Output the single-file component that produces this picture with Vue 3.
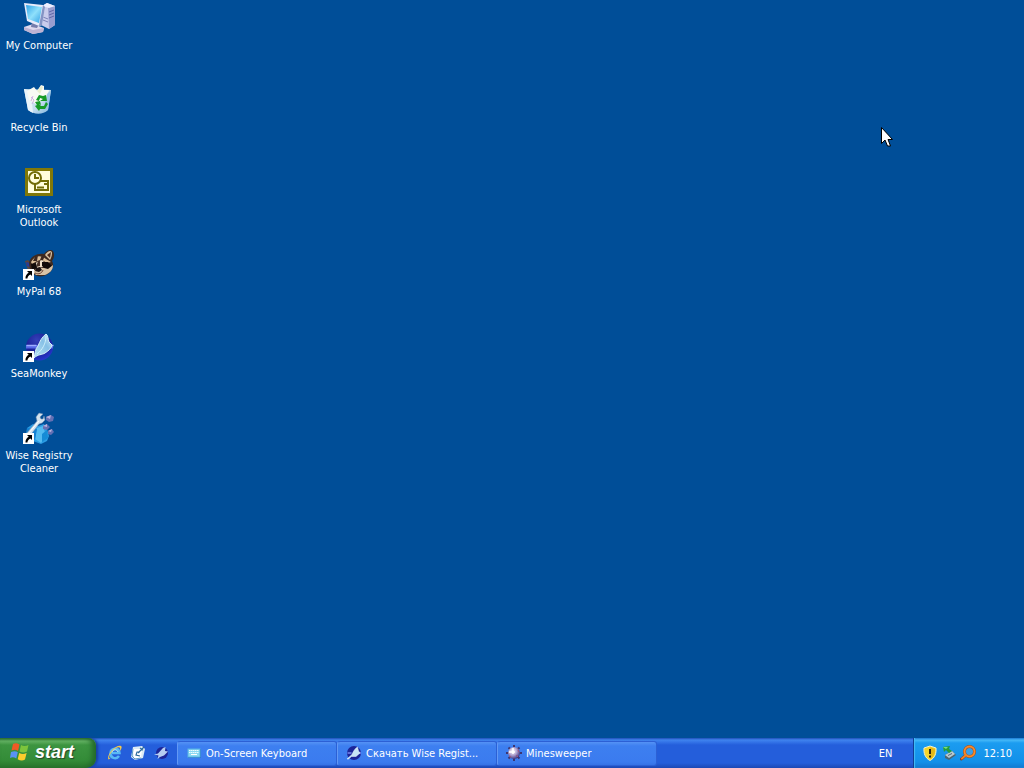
<script setup>
const tasks = [
  { id: 'keyboard', label: 'On-Screen Keyboard' },
  { id: 'seamonkey', label: 'Скачать Wise Regist...' },
  { id: 'mines', label: 'Minesweeper' },
]
</script>

<template>
  <div class="screen">
    <svg class="defs" aria-hidden="true">
      <defs>
        <linearGradient id="monitor" x1="0" y1="0" x2="1" y2="1">
          <stop offset="0" stop-color="#2fa4ea" /><stop offset="0.5" stop-color="#8fe0fb" /><stop offset="1" stop-color="#2f9fe4" />
        </linearGradient>
        <linearGradient id="bin" x1="0" y1="0" x2="1" y2="1">
          <stop offset="0" stop-color="#dcecf6" /><stop offset="0.6" stop-color="#c4ddef" /><stop offset="1" stop-color="#77aeda" />
        </linearGradient>
        <radialGradient id="sea" cx="0.4" cy="0.25" r="0.8">
          <stop offset="0" stop-color="#3440b8" /><stop offset="0.55" stop-color="#1a2098" /><stop offset="1" stop-color="#2738d2" />
        </radialGradient>
        <linearGradient id="wing" x1="0" y1="1" x2="1" y2="0">
          <stop offset="0" stop-color="#b9e3f4" /><stop offset="0.6" stop-color="#86c0e6" /><stop offset="1" stop-color="#d5f0fa" />
        </linearGradient>
        <radialGradient id="mine" cx="0.4" cy="0.35" r="0.7">
          <stop offset="0" stop-color="#ffffff" /><stop offset="0.45" stop-color="#b6a9d4" /><stop offset="1" stop-color="#312a76" />
        </radialGradient>
        <symbol id="arrow" viewBox="0 0 11 11">
          <rect width="11" height="11" fill="#fff" />
          <path d="M4 2h5v5L7.400 5.400C5.500 6.400 4.600 7.700 4.400 9.500H2.500C2.300 7 3.500 5 5.700 3.700Z" fill="#000" />
        </symbol>
        <symbol id="seamonkey" viewBox="0 0 32 32">
          <circle cx="16.500" cy="17" r="13.500" fill="url(#sea)" />
          <path d="M3 15h27v3.500h-27z" fill="#5567e6" />
          <path d="M3.500 15.500h10M27 15.500h3.500" stroke="#9dadff" stroke-width="1.500" />
          <path d="M11 28C12 24 12 19 15 16C17 11 19 7 23 4C25 5 25 9 26 12L29 15C28 19 25 21 22 23C19 25 15 24 11 28Z" fill="url(#wing)" stroke="#d3eff9" />
          <path d="M14 24C19 20 23 14 23 6" fill="none" stroke="#d9f7ff" stroke-width="0.800" />
        </symbol>
        <symbol id="seamonkey-small" viewBox="0 0 16 16">
          <circle cx="8" cy="8" r="7" fill="#1c2598" />
          <path d="M1.500 8h4M12 8h3" stroke="#7787ee" stroke-width="1.500" />
          <path d="M1 14L6 9.500C7.500 6 9 3.500 11.500 2L12.500 6L14 8L10 11.500L5.500 11.500L2.500 14Z" fill="#c7e4f6" stroke="#e8f6ff" stroke-width="0.500" />
        </symbol>
        <symbol id="seamonkey-bird" viewBox="0 0 16 16">
          <circle cx="9" cy="8" r="6" fill="#1c2598" />
          <path d="M1 9.500L5 8.500L10 3L12.500 2L12 6L15 6.500L11 10.500L7 12L4.500 14L5.500 10.500Z" fill="#b5cdf2" />
        </symbol>
      </defs>
    </svg>

    <main class="desktop">
      <button class="shortcut" type="button">
        <svg viewBox="0 0 32 32" aria-hidden="true">
          <path d="M19 4L24 1L32 4V23L26 27L18 23Z" fill="#c9ccec" />
          <path d="M25 5L32 4V23L26 27Z" fill="#989dcf" />
          <path d="M19 4L24 1L32 4L26 6Z" fill="#eceeff" />
          <path d="M26 10l5-2M26 13l5-2M26 16l5-2" stroke="#6267a8" />
          <path d="M20 15l5 2M20 18l5 2" stroke="#7c83b8" />
          <path d="M1 25L10 22L21 26L20 30L10 32L1 28Z" fill="#dfd9ee" />
          <path d="M1 25L10 28L21 26L20 30L10 32L1 28Z" fill="#bdb3d3" />
          <path d="M9 20L16 22L14 26L8 25Z" fill="#777dac" />
          <path d="M1 1L20 3L22 5L19 23L16 24L4 19Z" fill="#e7ebfa" />
          <path d="M20 3L22 5L19 23L16 24Z" fill="#8493c4" />
          <path d="M3 3L19 5L16 21L5 17Z" fill="url(#monitor)" />
        </svg>
        <span>My Computer</span>
      </button>

      <button class="shortcut" type="button">
        <svg viewBox="0 0 32 32" aria-hidden="true">
          <path d="M1 5L28 6L25 26C20 31 11 31 5 26Z" fill="url(#bin)" />
          <path d="M1 5L8 8L10 29L5 26Z" fill="#e9f4fa" />
          <path d="M4 7L11 3L14 7L18 1L21 2L21 6L26 6L24 13L13 20L6 16Z" fill="#f8faf4" />
          <path d="M14 7L18 2L20 3L17 10Z" fill="#e9efd0" />
          <path d="M8 13L11 16L9 20M10 12L8 17" fill="none" stroke="#d0b4e2" />
          <path d="M24 10L28 6L25 26L20 28Z" fill="#9cc6e6" />
          <path d="M13 16L16 11L20 12L23 11L24 17L17 17L20 15L17 14L16 17Z" fill="#159b26" />
          <path d="M12 18L17 17L18 21L16 20L18 22L21 22L23 18L25 20L22 25H17L16 27L12 22L14 21Z" fill="#179c28" />
        </svg>
        <span>Recycle Bin</span>
      </button>

      <button class="shortcut" type="button">
        <svg viewBox="0 0 32 32" aria-hidden="true">
          <rect x="3.500" y="3.500" width="25" height="25" fill="#fffddd" stroke="#817808" stroke-width="3" />
          <rect x="12" y="15" width="13" height="9" fill="#fffddd" stroke="#716c08" stroke-width="2" />
          <path d="M14 21.500h7M21 18h3" stroke="#716c08" stroke-width="2" />
          <circle cx="12" cy="12" r="6" fill="#fffddd" stroke="#716c08" stroke-width="2" />
          <path d="M12 8v4h4" fill="none" stroke="#716c08" stroke-width="2" />
        </svg>
        <span>Microsoft Outlook</span>
      </button>

      <button class="shortcut" type="button">
        <svg viewBox="0 0 32 32" aria-hidden="true">
          <path d="M2 13L5 12L8 15L11 23L5 22Z" fill="#5d473b" />
          <path d="M3 14L7 15L8 20L4 18Z" fill="#283c99" />
          <path d="M6 15C7 8 15 5 21 6C24 2 28 1 30 3C32 7 31 10 29 13C32 18 29 24 23 27C18 30 10 28 7 22Z" fill="#3e2a20" />
          <path d="M22 7C25 2 29 2 29 5C29 8 28 10 27 12Z" fill="#d9c2a2" />
          <path d="M24 7L28 4L27 10Z" fill="#4e2d20" />
          <path d="M8 14C12 7 18 7 23 11L28 14L24 15L19 12L14 13L9 16Z" fill="#d9bd98" />
          <path d="M12 9L15 7L14 13L10 13ZM19 7L22 8L20 12L17 12Z" fill="#3e2920" />
          <path d="M14 14L19 12L22 15L20 19L14 20L10 18Z" fill="#eedfc9" />
          <path d="M15 13L17 12L17 18L13 19Z" fill="#49332a" />
          <path d="M8 16L13 15L14 20L9 22ZM19 14L25 14L29 18L24 22L19 18Z" fill="#120b0a" />
          <path d="M21 20L25 21L30 17C30 22 27 25 22 27L13 27L9 23L16 20Z" fill="#d8c3a6" />
          <path d="M13 20L17 19L19 22L16 24L12 23Z" fill="#1d1415" />
          <path d="M12 25C16 27 19 25 20 22" fill="none" stroke="#704536" />
        </svg>
        <svg class="overlay" aria-hidden="true"><use href="#arrow" /></svg>
        <span>MyPal 68</span>
      </button>

      <button class="shortcut" type="button">
        <svg aria-hidden="true"><use href="#seamonkey" /></svg>
        <svg class="overlay" aria-hidden="true"><use href="#arrow" /></svg>
        <span>SeaMonkey</span>
      </button>

      <button class="shortcut" type="button">
        <svg viewBox="0 0 32 32" aria-hidden="true">
          <path d="M4 16L10 12L15 14L21 12L24 17L26 24L24 29L18 32L10 29L3 23Z" fill="#2a9ce3" />
          <path d="M14 16L20 14L23 24L18 31L12 27Z" fill="#52baf0" />
          <path d="M4 16L14 17L12 28L4 23Z" fill="#1682d2" />
          <path d="M19 22L24 18L25 26L19 30Z" fill="#168bd6" />
          <path d="M23 5L28 3L31 5L30 9L26 10L23 8ZM20 14L24 12L27 15L24 18L20 17ZM25 19L29 17L31 20L28 23L25 22Z" fill="#6470b4" />
          <path d="M23 5L28 3L27 7ZM20 14L24 12L24 15ZM25 19L29 17L28 20Z" fill="#b8b2dc" />
          <path d="M3 22L14 9L13 5L16 1L20 2L17 5L18 7L20 7L21 4L22 8L19 11L16 12L6 25L2 26Z" fill="#d3e3ee" stroke="#718bae" stroke-width="0.500" />
          <path d="M5 22L16 9" stroke="#fff" />
        </svg>
        <svg class="overlay" aria-hidden="true"><use href="#arrow" /></svg>
        <span>Wise Registry Cleaner</span>
      </button>
    </main>

    <footer class="taskbar">
      <button class="start" type="button">
        <svg viewBox="0 0 20 20" aria-hidden="true">
          <path d="M3 2C5 1 7 1 9.500 2.500L8 9C6 7.500 4 7.500 1.500 8.500Z" fill="#f05a25" />
          <path d="M11 3C13 4.300 16 4.300 18.500 3L17 9.500C14 11 12 10.500 9.500 9.500Z" fill="#7cc43c" />
          <path d="M1 10C4 8.700 6 9 7.800 10.300L6.300 16.500C4 15 2 15 0 16Z" fill="#5a92f4" />
          <path d="M9.200 11C12 12.300 14 12.200 16.600 11L15 17.500C12.500 19 10 18.500 7.700 17.200Z" fill="#fccd2c" />
        </svg>
        <span>start</span>
      </button>

      <nav class="quick" aria-label="Quick Launch">
        <button type="button" aria-label="Internet Explorer">
          <svg viewBox="0 0 16 16" aria-hidden="true">
            <path d="M12 11C9 15 3 13 3.500 8C4 2.500 12 2 12.500 8H5" fill="none" stroke="#58b8f4" stroke-width="2.500" />
            <path d="M1.500 14.500C-1 10 9-1 14 1C15.500 2 14 5 12.500 6.500C15 1 10 1 5.500 6C2 10 1 13 3.500 13.500Z" fill="#f4c94c" />
            <path d="M5 7.500C6 4 10 4 11 7" fill="none" stroke="#b9ebff" />
          </svg>
        </button>
        <button type="button" aria-label="Show Desktop">
          <svg viewBox="0 0 16 16" aria-hidden="true">
            <path d="M3 2L12 1L15 4L13 13L5 15L1 12Z" fill="#dcebf5" />
            <path d="M3 4L12 4L11 13L4 13Z" fill="#fff" />
            <path d="M3 4L2 11L5 14L11 13" fill="none" stroke="#5f9bc8" />
            <path d="M10 7L7 7L6 10L10 11M8 8L14 2M10 3L13 5" fill="none" stroke="#2b6a9c" stroke-width="1.200" />
          </svg>
        </button>
        <button type="button" aria-label="SeaMonkey">
          <svg aria-hidden="true"><use href="#seamonkey-bird" /></svg>
        </button>
      </nav>

      <nav class="tasks" aria-label="Open windows">
        <button v-for="task in tasks" :key="task.id" class="task" type="button">
          <svg v-if="task.id === 'keyboard'" viewBox="0 0 16 16" aria-hidden="true">
            <rect x="2" y="4" width="13" height="9" fill="#2368c4" />
            <rect x="2" y="4" width="12" height="8" fill="#8ad8f2" stroke="#58b4e6" />
            <path d="M3 5.500h10M3 7.500h10" stroke="#e9fbff" stroke-dasharray="1.500 0.500" />
            <path d="M5 9.500h6" stroke="#fff" />
          </svg>
          <svg v-else-if="task.id === 'seamonkey'" aria-hidden="true"><use href="#seamonkey-small" /></svg>
          <svg v-else viewBox="0 0 16 16" aria-hidden="true">
            <path d="M8 0v16M0 8h16M2.500 2.500l11 11M13.500 2.500l-11 11" stroke="#3c3570" stroke-width="2" />
            <circle cx="8" cy="8" r="6" fill="url(#mine)" />
            <path d="M7 3v6M3 7h6" stroke="#fff" stroke-width="1.500" />
            <path d="M3 11l2 1M10 10l2 2M12 5l1 2" stroke="#a4507c" />
          </svg>
          <span>{{ task.label }}</span>
        </button>
      </nav>

      <button class="language" type="button">EN</button>

      <div class="tray">
        <svg viewBox="0 0 16 16" role="img" aria-label="Security alert">
          <path d="M8 1L14 3C14.500 8 13 13 8 15.500C3 13 1.500 8 2 3Z" fill="#f5d62b" stroke="#f4efc9" />
          <path d="M8 2L13 4C13.300 8 12 12 8 14Z" fill="#e4b818" />
          <path d="M8 4v5M8 10.500v2" stroke="#2c2510" stroke-width="2" />
        </svg>
        <svg viewBox="0 0 16 16" role="img" aria-label="Safely remove hardware">
          <path d="M4 10L11 6L15 10L8 15L4 13Z" fill="#4c6674" />
          <path d="M4 10L11 6L14 9L8 13Z" fill="#b9c9cf" />
          <path d="M7 10.500l4-2" stroke="#526a79" />
          <path d="M2 2L9 1L8 4L11 6L8 8L5 5L3 7Z" fill="#259c3a" />
          <path d="M2 2L7 2L5 4Z" fill="#7bdf78" />
        </svg>
        <svg viewBox="0 0 16 16" role="img" aria-label="Search">
          <path d="M6 10L1.500 14" stroke="#923d16" stroke-width="3" stroke-linecap="round" />
          <circle cx="9.500" cy="6.500" r="5" fill="#3c9fe6" stroke="#a34c18" stroke-width="3" />
          <circle cx="9.500" cy="6.500" r="5" fill="none" stroke="#f58a2b" stroke-width="2" />
          <path d="M6 10L2 13.500" stroke="#f08127" stroke-width="2" stroke-linecap="round" />
        </svg>
        <time>12:10</time>
      </div>
    </footer>

    <svg class="pointer" viewBox="0 0 12 20" aria-hidden="true">
      <path d="M0.500 0.500V16.500L4 13L6.500 19H9.500L7 12.500H11.500Z" fill="#fff" stroke="#000" />
    </svg>
  </div>
</template>

<style>
body {
  margin: 0;
}
</style>

<style scoped>
.screen {
  position: relative;
  display: flex;
  flex-direction: column;
  min-height: 100vh;
  background: #004e98;
  color: #fff;
  font: 11px/13px Tahoma, "DejaVu Sans Condensed", "Noto Sans", sans-serif;
  overflow: hidden;
}

.defs {
  position: absolute;
  width: 0;
  height: 0;
}

button {
  margin: 0;
  padding: 0;
  border: 0;
  background: none;
  color: inherit;
  font: inherit;
}

svg {
  display: block;
  flex: none;
}

.desktop {
  flex: 1;
  display: grid;
  grid-template-columns: 78px;
  grid-auto-rows: 82px;
  align-content: start;
}

.shortcut {
  position: relative;
  display: flex;
  flex-direction: column;
  align-items: center;
  gap: 5px;
  padding-top: 2px;
}

.shortcut svg {
  width: 32px;
  height: 32px;
}

.shortcut .overlay {
  position: absolute;
  left: 23px;
  top: 23px;
  width: 11px;
  height: 11px;
}

.taskbar {
  display: flex;
  height: 30px;
  background: linear-gradient(#1f4fb8 0, #3f83ee 2px, #3474e8 4px, #245edb 7px, #245edb 25px, #1c48b4 30px);
}

.start {
  display: flex;
  align-items: center;
  gap: 5px;
  width: 96px;
  padding: 0 0 2px 10px;
  border-radius: 0 8px 10px 0;
  background: linear-gradient(#2d7030 0, #66b566 3px, #3c9440 7px, #348c38 22px, #2b772d 30px);
  box-shadow: inset -4px 0 5px #246a2a, 2px 0 3px #183f9c;
  font: italic bold 18px/24px "Liberation Sans", Arial, sans-serif;
  text-shadow: 1px 1px 1px #24452a;
}

.start svg {
  width: 20px;
  height: 20px;
}

.quick {
  display: flex;
  align-items: center;
  gap: 7px;
  width: 70px;
  padding-left: 11px;
}

.quick svg,
.task svg,
.tray svg {
  width: 16px;
  height: 16px;
}

.tasks {
  display: flex;
  flex: 1;
  min-width: 0;
  align-items: center;
}

.task {
  display: flex;
  flex: 0 1 160px;
  align-items: center;
  gap: 4px;
  height: 25px;
  min-width: 0;
  padding-left: 8px;
  border: 1px solid #2c60d5;
  border-left-color: #6299f5;
  border-radius: 3px;
  background: linear-gradient(#5592f5 0, #3d7ff0 4px, #3b7bef 20px, #326de0 25px);
}

.task span {
  overflow: hidden;
  white-space: nowrap;
}

.language {
  width: 56px;
}

.tray {
  display: flex;
  align-items: center;
  gap: 3px;
  padding: 0 12px 0 8px;
  border-left: 1px solid #103f93;
  background: linear-gradient(#1770cf 0, #45b8f8 2px, #1b9cf0 5px, #1290e9 24px, #1278cf 30px);
  box-shadow: inset 1px 0 1px #45bdf5;
}

.tray time {
  margin-left: 4px;
}

.pointer {
  position: absolute;
  left: 881px;
  top: 127px;
  width: 12px;
  height: 20px;
}
</style>
